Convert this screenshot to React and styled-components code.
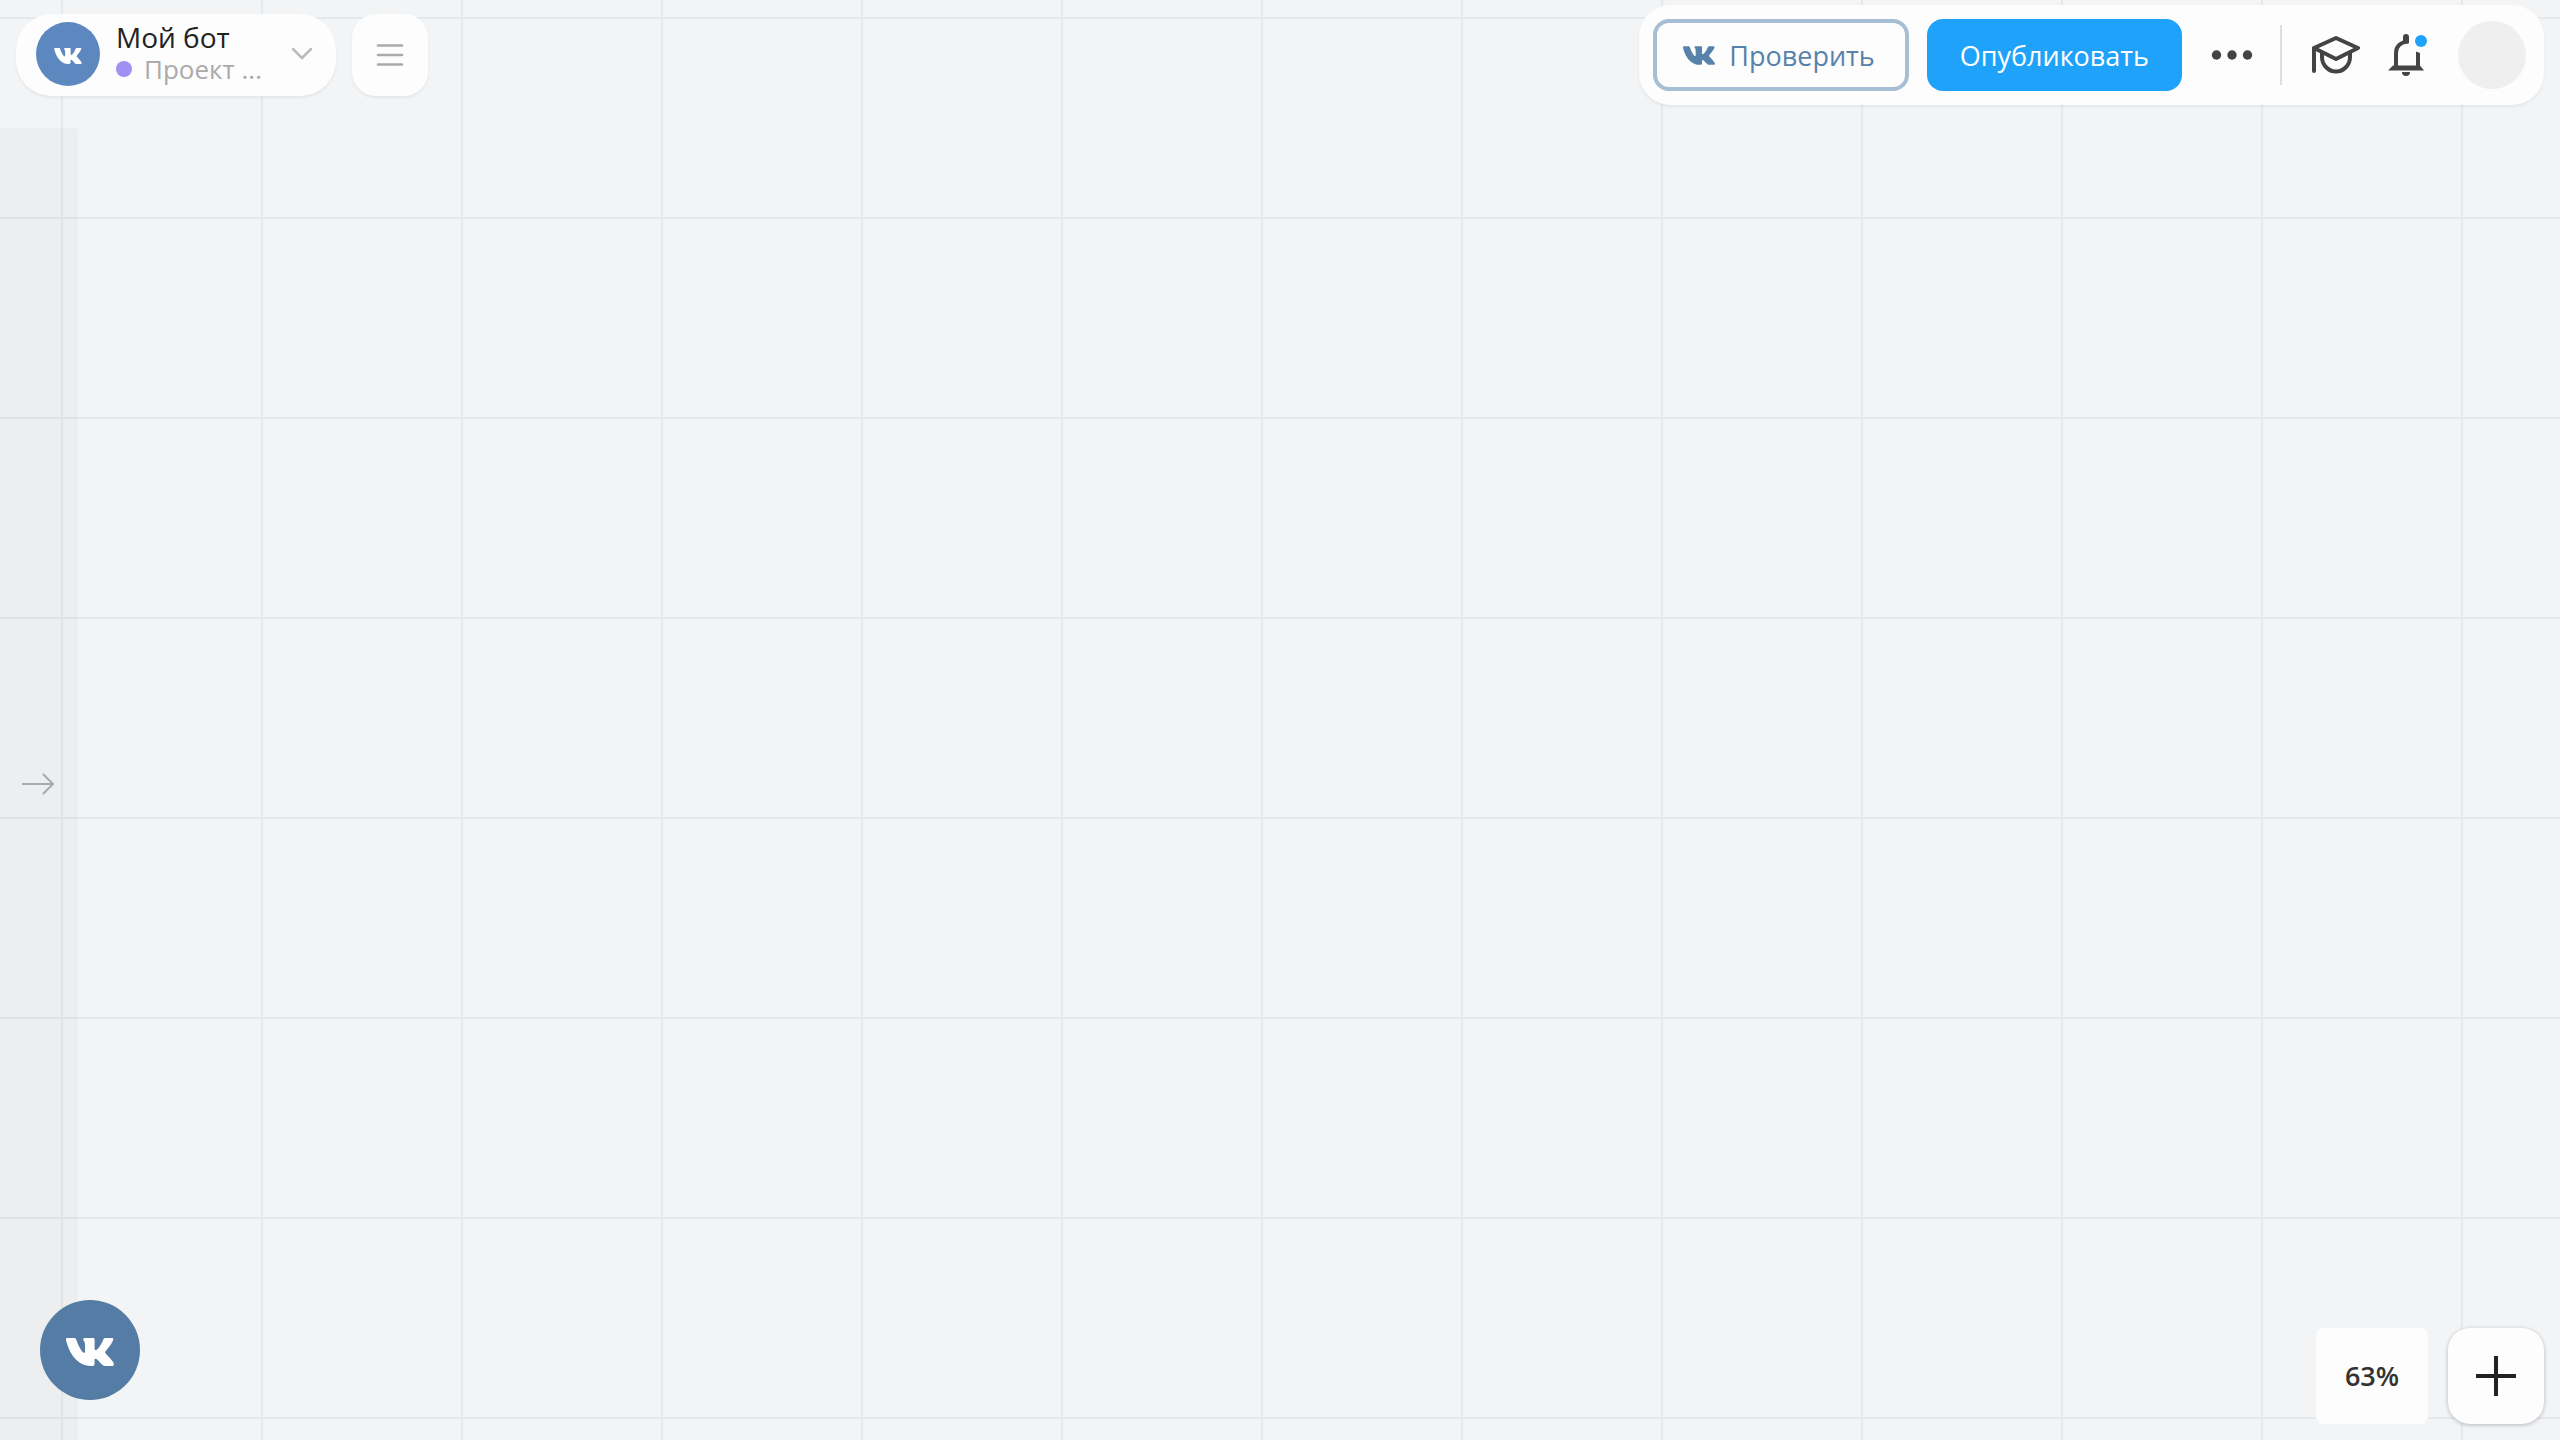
import styled, { createGlobalStyle } from 'styled-components'

const GlobalStyle = createGlobalStyle`
    * {
        box-sizing: border-box;
    }

    body {
        margin: 0;
        background: #f2f4f6;
        font-family: 'Open Sans', 'Noto Sans', sans-serif;
    }

    button {
        font-family: inherit;
        cursor: pointer;
    }
`;

const Canvas = styled.main`
    min-height: 100vh;
    display: flex;
    flex-direction: column;
    background-color: #f2f4f6;
    background-image:
        linear-gradient(to right, #e4e9ed 2px, transparent 2px),
        linear-gradient(to bottom, #e4e9ed 2px, transparent 2px);
    background-size: 200px 200px;
    background-position: 61px 17px;
`;

const TopBar = styled.header`
    height: 128px;
    padding: 5px 16px 0;
    display: flex;
    align-items: flex-start;
    justify-content: space-between;
`;

const TopLeft = styled.div`
    padding-top: 9px;
    display: flex;
    gap: 16px;
`;

const ProjectButton = styled.button`
    width: 320px;
    height: 82px;
    padding: 0 24px 2px 20px;
    display: flex;
    align-items: center;
    gap: 16px;
    border: 0;
    border-radius: 36px;
    background: #fdfdfd;
    box-shadow: 0 2px 3px rgba(0, 0, 0, 0.06);
    text-align: left;
`;

const LogoCircle = styled.span`
    flex: none;
    width: ${props => props.$size}px;
    height: ${props => props.$size}px;
    padding-top: 4px;
    border-radius: 50%;
    background: ${props => props.$color};
    color: #fff;
    display: flex;
    align-items: center;
    justify-content: center;
`;

const ProjectInfo = styled.span`
    flex: 1;
    min-width: 0;
    padding-bottom: 2px;
    display: flex;
    flex-direction: column;
`;

const ProjectName = styled.span`
    color: #222;
    font-size: 28px;
    line-height: 32px;
`;

const ProjectStatus = styled.span`
    display: flex;
    align-items: center;
    gap: 12px;
    color: #aaa;
    font-size: 26px;
    line-height: 32px;
`;

const StatusDot = styled.span`
    width: 16px;
    height: 16px;
    border-radius: 50%;
    background: #9f91f2;
`;

const MenuButton = styled.button`
    width: 76px;
    height: 82px;
    padding: 0;
    display: flex;
    align-items: center;
    justify-content: center;
    border: 0;
    border-radius: 24px;
    background: #fdfdfd;
    box-shadow: 0 2px 3px rgba(0, 0, 0, 0.06);
`;

const Actions = styled.div`
    height: 100px;
    padding: 0 18px 0 14px;
    display: flex;
    align-items: center;
    border-radius: 32px;
    background: #fdfdfd;
    box-shadow: 0 2px 3px rgba(0, 0, 0, 0.06);
`;

const ActionButton = styled.button`
    height: 72px;
    padding: ${props => props.$primary ? '0 33px' : '0 30px 0 26px'};
    margin-right: ${props => props.$primary ? 28 : 18}px;
    display: flex;
    align-items: center;
    gap: 14px;
    border: ${props => props.$primary ? '0' : '4px solid #a7bfd4'};
    border-radius: 16px;
    background: ${props => props.$primary ? '#1fa2f9' : 'transparent'};
    color: ${props => props.$primary ? '#fff' : '#5782ab'};
    font-size: 27px;
`;

const IconButton = styled.button`
    padding: 0;
    display: flex;
    border: 0;
    background: none;
    color: #444;
`;

const Divider = styled.span`
    width: 2px;
    height: 60px;
    margin: 0 28px 0 26px;
    background: #dedede;
`;

const IconGroup = styled.div`
    display: flex;
    align-items: center;
    gap: 28px;
`;

const Avatar = styled.button`
    width: 68px;
    height: 68px;
    padding: 0;
    border: 0;
    border-radius: 50%;
    background: #efefef;
`;

const Workspace = styled.div`
    flex: 1;
    display: flex;
    justify-content: space-between;
`;

const SidePanel = styled.aside`
    position: relative;
    width: 78px;
    padding-right: 2px;
    display: flex;
    flex-direction: column;
    align-items: center;
    justify-content: center;
    border-radius: 0 4px 0 0;
    background: rgba(0, 0, 0, 0.024);
`;

const ChatButton = styled.button`
    position: absolute;
    left: 40px;
    bottom: 40px;
    padding: 0;
    border: 0;
    border-radius: 50%;
    background: none;
`;

const ZoomControls = styled.div`
    align-self: flex-end;
    padding: 0 16px 16px 0;
    display: flex;
    align-items: center;
    gap: 20px;
`;

const ZoomValue = styled.output`
    width: 112px;
    height: 96px;
    padding-bottom: 2px;
    display: flex;
    align-items: center;
    justify-content: center;
    border-radius: 8px;
    background: #fdfdfd;
    color: #333;
    font-size: 27px;
    font-weight: 600;
`;

const AddButton = styled.button`
    width: 96px;
    height: 96px;
    padding: 0;
    display: flex;
    align-items: center;
    justify-content: center;
    border: 0;
    border-radius: 22px;
    background: #fdfdfd;
    box-shadow: 0 1px 4px rgba(0, 0, 0, 0.25);
`;

const VkLogo = ({ width }) => (
    <svg width={width} height={Math.round(width * 0.583)} viewBox='0 0 48 28' fill='currentColor' aria-hidden='true'>
        <path d='M1.5 0h6.600c1.300 0 1.800.600 2.200 1.800 1.800 5.400 4.500 10.500 6.600 12.400 1 .900 2.100.800 2.100-.700V6.200C19 3.600 17.200 2.800 17.200 1.300 17.200.600 17.800 0 18.700 0h8.300c1.200 0 1.600.600 1.600 1.900v8.600c0 1.200.500 1.600.900 1.600.700 0 1.300-.400 2.600-1.700C35.100 7.300 37 2.200 37.200 1.700 37.600.600 38.200 0 39.600 0h6c1.600 0 2 .800 1.600 1.900C46.300 5.100 40.400 12.200 39.800 13c-.700 1-.900 1.600 0 2.700.700.900 7 6.700 7.900 9.500.500 1.800-.300 2.800-1.800 2.800h-7c-1.600 0-2.400-.800-4.200-2.700-2.300-2.500-3.900-4.600-5.200-4.600-.800 0-1 .500-1 1.800v3.500c0 1.400-.500 2-4.100 2C14.600 28 4.300 19.600.2 3 -.300 1.100-.100 0 1.500 0Z' />
    </svg>
)

export default function App() {
    return (
        <Canvas>
            <GlobalStyle />
            <TopBar>
                <TopLeft>
                    <ProjectButton type='button'>
                        <LogoCircle $size={64} $color='#5d87bf'><VkLogo width={28} /></LogoCircle>
                        <ProjectInfo>
                            <ProjectName>Мой бот</ProjectName>
                            <ProjectStatus><StatusDot />Проект ...</ProjectStatus>
                        </ProjectInfo>
                        <svg width='20' height='12' viewBox='0 0 20 12' fill='none' stroke='#bbb' strokeWidth='2.500' strokeLinecap='round' strokeLinejoin='round'>
                            <path d='M1 1l9 9 9-9' />
                        </svg>
                    </ProjectButton>
                    <MenuButton type='button' aria-label='Меню'>
                        <svg width='28' height='24' viewBox='0 0 28 24' stroke='#aaa' strokeWidth='2.600' strokeLinecap='round'>
                            <path d='M2 2.500h24M2 12h24M2 21.500h24' />
                        </svg>
                    </MenuButton>
                </TopLeft>
                <Actions>
                    <ActionButton type='button'><VkLogo width={32} />Проверить</ActionButton>
                    <ActionButton type='button' $primary>Опубликовать</ActionButton>
                    <IconButton type='button' aria-label='Ещё'>
                        <svg width='44' height='12' viewBox='0 0 44 12' fill='currentColor'>
                            <circle cx='6.500' cy='6' r='4.700' />
                            <circle cx='22' cy='6' r='4.700' />
                            <circle cx='37.500' cy='6' r='4.700' />
                        </svg>
                    </IconButton>
                    <Divider />
                    <IconGroup>
                        <IconButton type='button' aria-label='Обучение'>
                            <svg width='50' height='40' viewBox='0 0 50 40' fill='none' stroke='currentColor' strokeWidth='4' strokeLinecap='round' strokeLinejoin='round'>
                                <path d='M4 36V13L26 3l22 10-22 11L4 13' />
                                <path d='M12 17v5a14 14.500 0 0 0 28 0v-5' strokeLinecap='butt' />
                            </svg>
                        </IconButton>
                        <IconButton type='button' aria-label='Уведомления'>
                            <svg width='42' height='44' viewBox='0 0 42 44' fill='none' stroke='currentColor' strokeWidth='4'>
                                <path d='M8 34V20c0-6.500 4.500-11 12.500-11.500' />
                                <path d='M28 18.500l4 1.500v13h-4z' fill='currentColor' stroke='none' />
                                <path d='M5 32.500h27l4 5H0z' fill='currentColor' stroke='none' />
                                <path d='M15 10V4a3 3 0 0 1 6 0v6z' fill='currentColor' stroke='none' />
                                <path d='M14 39h8a4 4 0 0 1-8 0z' fill='currentColor' stroke='none' />
                                <circle cx='33' cy='8' r='6' fill='#1fa2f9' stroke='none' />
                            </svg>
                        </IconButton>
                        <Avatar type='button' aria-label='Профиль' />
                    </IconGroup>
                </Actions>
            </TopBar>
            <Workspace>
                <SidePanel>
                    <IconButton type='button' aria-label='Открыть панель'>
                        <svg width='34' height='22' viewBox='0 0 34 22' fill='none' stroke='#aaa' strokeWidth='2'>
                            <path d='M1 11h31M22 1l10 10-10 10' />
                        </svg>
                    </IconButton>
                    <ChatButton type='button' aria-label='VK'>
                        <LogoCircle $size={100} $color='#557ca5'><VkLogo width={48} /></LogoCircle>
                    </ChatButton>
                </SidePanel>
                <ZoomControls>
                    <ZoomValue>63%</ZoomValue>
                    <AddButton type='button' aria-label='Добавить'>
                        <svg width='40' height='40' viewBox='0 0 40 40' stroke='#222' strokeWidth='4'>
                            <path d='M20 0v40M0 20h40' />
                        </svg>
                    </AddButton>
                </ZoomControls>
            </Workspace>
        </Canvas>
    )
}
